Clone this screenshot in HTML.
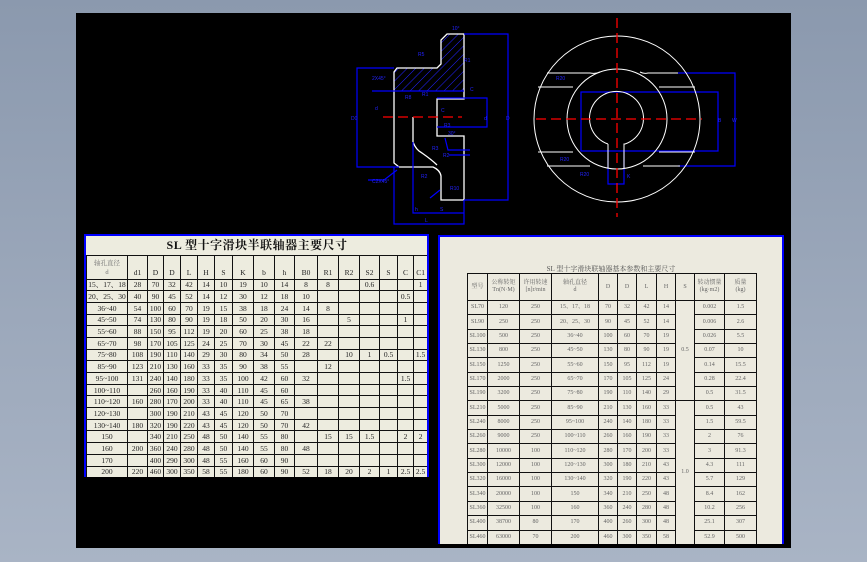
<!DOCTYPE html>
<html><head><meta charset="utf-8"><style>
*{margin:0;padding:0;box-sizing:border-box}
html,body{width:867px;height:562px;overflow:hidden}
body{background:linear-gradient(#8b99ae,#a9b4c5);position:relative;font-family:"Liberation Serif","Noto Serif CJK SC",serif}
#cv{position:absolute;left:76px;top:13px;width:715px;height:535px;background:#000}
#lt{position:absolute;left:84px;top:234px;width:345px;height:243px;background:#edecdf;border-top:2px solid #00f;border-left:2px solid #00f;border-right:2px solid #00f;overflow:hidden}
#lt table{border-collapse:collapse;table-layout:fixed;width:341px}
#lt td{border:1px solid #111;font-size:7.5px;text-align:center;height:11.7px;line-height:9px;padding:0;white-space:nowrap;overflow:hidden;color:#222}
#lt .t{height:19px;font-size:12px;font-weight:bold;letter-spacing:0.5px;border:none;border-bottom:1px solid #111;color:#111}
#lt .h td{height:24px;vertical-align:bottom;padding-bottom:2px}
#lt .h td.f{font-size:6.5px;line-height:9px;color:#777}
#rt{position:absolute;left:438px;top:235px;width:346px;height:309px;background:#eceadf;border:2px solid #00f;border-bottom:none;overflow:hidden}
#rt .ti{position:absolute;left:0;width:100%;top:27px;text-align:center;font-size:7px;color:#555}
#rt table{position:absolute;left:27px;top:36px;border-collapse:collapse;table-layout:fixed;width:289px}
#rt td{border:1.3px solid #111;font-size:6px;color:#666;text-align:center;height:14.35px;line-height:7px;padding:0;white-space:nowrap;overflow:hidden}
#rt .h td{height:27px}
</style></head><body>
<div id="cv"></div>
<svg style="position:absolute;left:0;top:0" width="867" height="562">
<defs><pattern id="hp" width="6" height="6" patternUnits="userSpaceOnUse" patternTransform="rotate(45)"><line x1="0" y1="0" x2="0" y2="6" stroke="#22f" stroke-width="1"/></pattern></defs>
<path d="M394,72 L397,68 L437,68 L441,64 L441,40 L447,34 L464,34 L464,91 L394,91 Z" fill="url(#hp)"/>
<g fill="none" stroke="#fff" stroke-width="1.3">
<path d="M464,34 L447,34 L441,40 L441,64 L437,68 L397,68 L394,72 L394,163 L399,167 L433,167 Q440,170 441,176 L441,200 L464,200 L464,136 L437,136 L437,99 L464,99 Z"/>
<path d="M413,117 L413,142 Q416,150 422,153 Q432,160 437,165"/>
</g>
<g fill="none" stroke="#00f" stroke-width="1.2">
<path d="M372,91 L464,91"/><path d="M464,34 L508,34 L508,200 L464,200"/>
<path d="M437,98 L487,98 L487,127 L437,127"/>
<path d="M394,68 L357,68 L357,167 L399,167"/>
<path d="M413,142 L413,213 L464,213"/><path d="M394,167 L394,224 L464,224 L464,200"/>
<path d="M430,198 L440,190 M397,170 L384,180 L368,180 M445,138 L448,150 L470,150 M449,155 L470,155"/>
<path d="M581,92 L718,92 L718,151 L581,151 Z M678,73 L735,73 L735,166 L678,166 M608,150 L608,184 L624,184 L624,150"/>
</g>
<g fill="#22f" font-size="5" font-family="Liberation Sans,sans-serif">
<text x="452" y="30">10°</text><text x="418" y="56">R5</text><text x="464" y="62">R1</text><text x="372" y="80">2X45°</text>
<text x="405" y="99">R8</text><text x="422" y="96">R1</text><text x="470" y="91">C</text><text x="441" y="112">C</text><text x="375" y="110">d</text>
<text x="351" y="120">D0</text><text x="484" y="120">d</text><text x="506" y="120">D</text><text x="444" y="127">R3</text><text x="448" y="135">30°</text>
<text x="432" y="150">R3</text><text x="443" y="157">R2</text><text x="421" y="178">R2</text><text x="372" y="183">C2X45°</text><text x="450" y="190">R10</text>
<text x="415" y="211">h</text><text x="440" y="211">S</text><text x="425" y="222">L</text>
<text x="556" y="80">R20</text><text x="560" y="161">R20</text><text x="580" y="176">R20</text><text x="627" y="178">K</text><text x="718" y="122">B</text><text x="732" y="122">W</text>
</g>
<g fill="none" stroke="#fff" stroke-width="1">
<circle cx="617" cy="119" r="83"/><circle cx="617" cy="119" r="50"/>
<path d="M608,144 A27,27 0 1 1 625,144 L624,144 L624,168 M608,144 L608,168"/>
<path d="M547,73 L590,73 Q596,74 600,72 M640,72 Q644,74 648,73 L678,73 M538,87 L573,87 M659,87 L695,87 M538,152 L573,152 M659,152 L695,152 M547,166 L590,166 M643,166 L680,166"/>
</g>
<g stroke="#f00" stroke-width="1.3" stroke-dasharray="10,5" fill="none">
<path d="M617,18 L617,217 M536,119 L702,119 M383,117 L462,117"/>
</g>
</svg>
<div id="lt"><table>
<colgroup><col style="width:41px"><col style="width:20px"><col style="width:16px"><col style="width:17px"><col style="width:17px"><col style="width:17px"><col style="width:18px"><col style="width:21px"><col style="width:21px"><col style="width:20px"><col style="width:23px"><col style="width:21px"><col style="width:21px"><col style="width:20px"><col style="width:18px"><col style="width:16px"><col style="width:14px"></colgroup>
<tr><td class="t" colspan="17">SL 型十字滑块半联轴器主要尺寸</td></tr>
<tr class="h"><td class="f">轴孔直径<br>d</td><td>d1</td><td>D</td><td>D</td><td>L</td><td>H</td><td>S</td><td>K</td><td>b</td><td>h</td><td>B0</td><td>R1</td><td>R2</td><td>S2</td><td>S</td><td>C</td><td>C1</td></tr>
<tr><td>15、17、18</td><td>28</td><td>70</td><td>32</td><td>42</td><td>14</td><td>10</td><td>19</td><td>10</td><td>14</td><td>8</td><td>8</td><td></td><td>0.6</td><td></td><td></td><td>1</td></tr>
<tr><td>20、25、30</td><td>40</td><td>90</td><td>45</td><td>52</td><td>14</td><td>12</td><td>30</td><td>12</td><td>18</td><td>10</td><td></td><td></td><td></td><td></td><td>0.5</td><td></td></tr>
<tr><td>36~40</td><td>54</td><td>100</td><td>60</td><td>70</td><td>19</td><td>15</td><td>38</td><td>18</td><td>24</td><td>14</td><td>8</td><td></td><td></td><td></td><td></td><td></td></tr>
<tr><td>45~50</td><td>74</td><td>130</td><td>80</td><td>90</td><td>19</td><td>18</td><td>50</td><td>20</td><td>30</td><td>16</td><td></td><td>5</td><td></td><td></td><td>1</td><td></td></tr>
<tr><td>55~60</td><td>88</td><td>150</td><td>95</td><td>112</td><td>19</td><td>20</td><td>60</td><td>25</td><td>38</td><td>18</td><td></td><td></td><td></td><td></td><td></td><td></td></tr>
<tr><td>65~70</td><td>98</td><td>170</td><td>105</td><td>125</td><td>24</td><td>25</td><td>70</td><td>30</td><td>45</td><td>22</td><td>22</td><td></td><td></td><td></td><td></td><td></td></tr>
<tr><td>75~80</td><td>108</td><td>190</td><td>110</td><td>140</td><td>29</td><td>30</td><td>80</td><td>34</td><td>50</td><td>28</td><td></td><td>10</td><td>1</td><td>0.5</td><td></td><td>1.5</td></tr>
<tr><td>85~90</td><td>123</td><td>210</td><td>130</td><td>160</td><td>33</td><td>35</td><td>90</td><td>38</td><td>55</td><td></td><td>12</td><td></td><td></td><td></td><td></td><td></td></tr>
<tr><td>95~100</td><td>131</td><td>240</td><td>140</td><td>180</td><td>33</td><td>35</td><td>100</td><td>42</td><td>60</td><td>32</td><td></td><td></td><td></td><td></td><td>1.5</td><td></td></tr>
<tr><td>100~110</td><td></td><td>260</td><td>160</td><td>190</td><td>33</td><td>40</td><td>110</td><td>45</td><td>60</td><td></td><td></td><td></td><td></td><td></td><td></td><td></td></tr>
<tr><td>110~120</td><td>160</td><td>280</td><td>170</td><td>200</td><td>33</td><td>40</td><td>110</td><td>45</td><td>65</td><td>38</td><td></td><td></td><td></td><td></td><td></td><td></td></tr>
<tr><td>120~130</td><td></td><td>300</td><td>190</td><td>210</td><td>43</td><td>45</td><td>120</td><td>50</td><td>70</td><td></td><td></td><td></td><td></td><td></td><td></td><td></td></tr>
<tr><td>130~140</td><td>180</td><td>320</td><td>190</td><td>220</td><td>43</td><td>45</td><td>120</td><td>50</td><td>70</td><td>42</td><td></td><td></td><td></td><td></td><td></td><td></td></tr>
<tr><td>150</td><td></td><td>340</td><td>210</td><td>250</td><td>48</td><td>50</td><td>140</td><td>55</td><td>80</td><td></td><td>15</td><td>15</td><td>1.5</td><td></td><td>2</td><td>2</td></tr>
<tr><td>160</td><td>200</td><td>360</td><td>240</td><td>280</td><td>48</td><td>50</td><td>140</td><td>55</td><td>80</td><td>48</td><td></td><td></td><td></td><td></td><td></td><td></td></tr>
<tr><td>170</td><td></td><td>400</td><td>290</td><td>300</td><td>48</td><td>55</td><td>160</td><td>60</td><td>90</td><td></td><td></td><td></td><td></td><td></td><td></td><td></td></tr>
<tr><td>200</td><td>220</td><td>460</td><td>300</td><td>350</td><td>58</td><td>55</td><td>180</td><td>60</td><td>90</td><td>52</td><td>18</td><td>20</td><td>2</td><td>1</td><td>2.5</td><td>2.5</td></tr>
</table></div>
<div id="rt"><div class="ti">SL 型十字滑块联轴器基本参数和主要尺寸</div>
<table>
<colgroup><col style="width:20px"><col style="width:32px"><col style="width:32px"><col style="width:47px"><col style="width:19px"><col style="width:19px"><col style="width:20px"><col style="width:19px"><col style="width:19px"><col style="width:30px"><col style="width:32px"></colgroup>
<tr class="h"><td>型号</td><td>公称转矩<br>Tn(N·M)</td><td>许用转速<br>[n]r/min</td><td>轴孔直径<br>d</td><td>D</td><td>D</td><td>L</td><td>H</td><td>S</td><td>转动惯量<br>(kg·m2)</td><td>质量<br>(kg)</td></tr>
<tr><td>SL70</td><td>120</td><td>250</td><td>15、17、18</td><td>70</td><td>32</td><td>42</td><td>14</td><td rowspan="7">0.5</td><td>0.002</td><td>1.5</td></tr>
<tr><td>SL90</td><td>250</td><td>250</td><td>20、25、30</td><td>90</td><td>45</td><td>52</td><td>14</td><td>0.006</td><td>2.6</td></tr>
<tr><td>SL100</td><td>500</td><td>250</td><td>36~40</td><td>100</td><td>60</td><td>70</td><td>19</td><td>0.026</td><td>5.5</td></tr>
<tr><td>SL130</td><td>800</td><td>250</td><td>45~50</td><td>130</td><td>80</td><td>90</td><td>19</td><td>0.07</td><td>10</td></tr>
<tr><td>SL150</td><td>1250</td><td>250</td><td>55~60</td><td>150</td><td>95</td><td>112</td><td>19</td><td>0.14</td><td>15.5</td></tr>
<tr><td>SL170</td><td>2000</td><td>250</td><td>65~70</td><td>170</td><td>105</td><td>125</td><td>24</td><td>0.28</td><td>22.4</td></tr>
<tr><td>SL190</td><td>3200</td><td>250</td><td>75~80</td><td>190</td><td>110</td><td>140</td><td>29</td><td>0.5</td><td>31.5</td></tr>
<tr><td>SL210</td><td>5000</td><td>250</td><td>85~90</td><td>210</td><td>130</td><td>160</td><td>33</td><td rowspan="10">1.0</td><td>0.5</td><td>43</td></tr>
<tr><td>SL240</td><td>8000</td><td>250</td><td>95~100</td><td>240</td><td>140</td><td>180</td><td>33</td><td>1.5</td><td>59.5</td></tr>
<tr><td>SL260</td><td>9000</td><td>250</td><td>100~110</td><td>260</td><td>160</td><td>190</td><td>33</td><td>2</td><td>76</td></tr>
<tr><td>SL280</td><td>10000</td><td>100</td><td>110~120</td><td>280</td><td>170</td><td>200</td><td>33</td><td>3</td><td>91.3</td></tr>
<tr><td>SL300</td><td>12000</td><td>100</td><td>120~130</td><td>300</td><td>180</td><td>210</td><td>43</td><td>4.3</td><td>111</td></tr>
<tr><td>SL320</td><td>16000</td><td>100</td><td>130~140</td><td>320</td><td>190</td><td>220</td><td>43</td><td>5.7</td><td>129</td></tr>
<tr><td>SL340</td><td>20000</td><td>100</td><td>150</td><td>340</td><td>210</td><td>250</td><td>48</td><td>8.4</td><td>162</td></tr>
<tr><td>SL360</td><td>32500</td><td>100</td><td>160</td><td>360</td><td>240</td><td>280</td><td>48</td><td>10.2</td><td>256</td></tr>
<tr><td>SL400</td><td>38700</td><td>80</td><td>170</td><td>400</td><td>260</td><td>300</td><td>48</td><td>25.1</td><td>307</td></tr>
<tr><td>SL460</td><td>63000</td><td>70</td><td>200</td><td>460</td><td>300</td><td>350</td><td>58</td><td>52.9</td><td>500</td></tr>
</table></div>
</body></html>
